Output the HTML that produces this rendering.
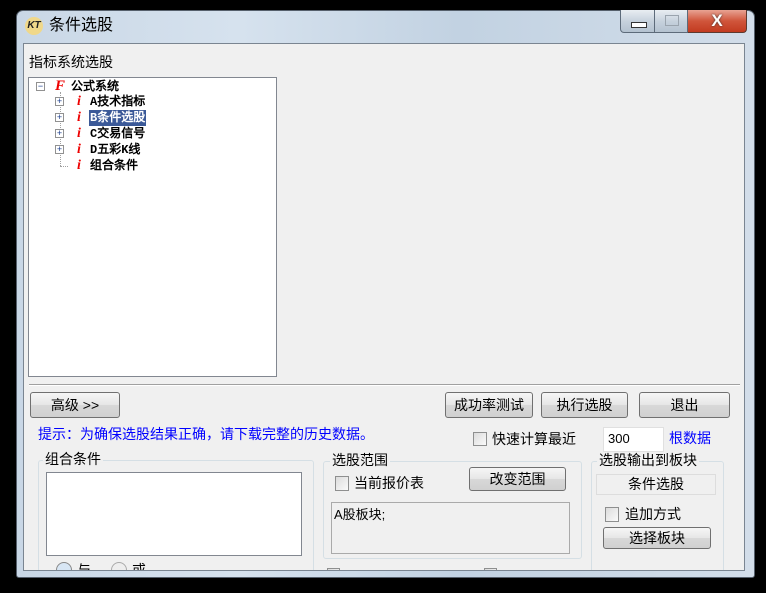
<!DOCTYPE html>
<html><head><meta charset="utf-8"><style>
body{margin:0;width:766px;height:593px;background:#000;position:relative;overflow:hidden;font-family:"Liberation Sans","Noto Sans CJK SC","WenQuanYi Zen Hei",sans-serif;font-size:13px;color:#000}
.a{position:absolute}
.win{left:16px;top:10px;width:739px;height:568px;border-radius:7px 7px 3px 3px;background:linear-gradient(90deg,#c9d7e6 0%,#d6e2ee 30%,#c2d2e2 60%,#d2dde9 100%);border:1px solid #56606c;box-sizing:border-box}
.client{left:23px;top:43px;width:722px;height:528px;background:#f0f0f0;border:1px solid #7a8591;box-sizing:border-box;overflow:hidden}
.btn{background:linear-gradient(#f6f6f6,#e6e6e6 50%,#d8d8d8 51%,#d0d0d0);border:1px solid #707070;border-radius:3px;box-sizing:border-box;text-align:center;font-size:14px;line-height:24px}
.cb{width:13px;height:13px;border:1px solid #8e8f8f;background:linear-gradient(135deg,#dcdcdc,#fafafa);box-sizing:border-box}
.grp{border:1px solid #d5dfe5;border-radius:3px;box-sizing:border-box}
.lg{background:#f0f0f0;padding:0 2px;font-size:14px;line-height:16px}
.t{font-size:12px;font-weight:bold;line-height:16px;font-family:"Liberation Mono","WenQuanYi Zen Hei",monospace}
.ri{color:#e00;font-style:italic;font-weight:bold;font-family:"Liberation Serif",serif;font-size:14px}
.pl{width:9px;height:9px;border:1px solid #919191;box-sizing:border-box;background:#fff;font-size:9px;line-height:7px;text-align:center;color:#1a3c8c}
</style></head><body>
<div class="a win"></div>
<div class="a" style="left:25px;top:17px;width:18px;height:18px;border-radius:50%;background:#f0d88a;font:bold italic 10px 'Liberation Sans';line-height:18px;text-align:center;color:#222">KT</div>
<div class="a" style="left:49px;top:16px;font-size:16px;line-height:20px">条件选股</div>
<div class="a" style="left:620px;top:10px;width:35px;height:23px;border:1px solid #5d6b7a;border-top:none;border-radius:0 0 0 4px;background:linear-gradient(#e8edf2,#c7d2dd 50%,#b4c2d0);box-sizing:border-box"><div class="a" style="left:10px;top:12px;width:14px;height:4px;background:#fff;border:1px solid #333"></div></div>
<div class="a" style="left:655px;top:10px;width:33px;height:23px;border:1px solid #5d6b7a;border-top:none;border-left:none;background:linear-gradient(#e8edf2,#c7d2dd 50%,#b4c2d0);box-sizing:border-box"><div class="a" style="left:10px;top:5px;width:12px;height:9px;border:1px solid #9aa4ae"></div></div>
<div class="a" style="left:688px;top:10px;width:59px;height:23px;border:1px solid #5d3a30;border-top:none;border-left:none;border-radius:0 0 4px 0;background:linear-gradient(#e8a393,#d0553b 50%,#c23b20);box-sizing:border-box;color:#fff;font:bold 17px 'Liberation Sans';text-align:center;line-height:22px;text-shadow:0 0 2px #333">X</div>
<div class="a client">
<div class="a" style="left:5px;top:9px;font-size:14px;line-height:18px">指标系统选股</div>
<div class="a" style="left:4px;top:33px;width:249px;height:300px;background:#fff;border:1px solid #828790;box-sizing:border-box"></div>
<div class="a pl" style="left:12px;top:38px">−</div>
<div class="a" style="left:36px;top:48px;height:74px;border-left:1px dotted #a0a0a0"></div>
<div class="a" style="left:36px;top:122px;width:8px;border-top:1px dotted #a0a0a0"></div>
<div class="a ri" style="left:31px;top:34px;font-size:15px">F</div>
<div class="a t" style="left:47px;top:35px">公式系统</div>
<div class="a pl" style="left:31px;top:53px">+</div><div class="a ri" style="left:53px;top:50px">i</div><div class="a t" style="left:66px;top:50px">A技术指标</div>
<div class="a pl" style="left:31px;top:69px">+</div><div class="a ri" style="left:53px;top:66px">i</div><div class="a t" style="left:65px;top:66px;background:#3b5998;color:#fff;padding:0 1px">B条件选股</div>
<div class="a pl" style="left:31px;top:85px">+</div><div class="a ri" style="left:53px;top:82px">i</div><div class="a t" style="left:66px;top:82px">C交易信号</div>
<div class="a pl" style="left:31px;top:101px">+</div><div class="a ri" style="left:53px;top:98px">i</div><div class="a t" style="left:66px;top:98px">D五彩K线</div>
<div class="a ri" style="left:53px;top:114px">i</div><div class="a t" style="left:66px;top:114px">组合条件</div>
<div class="a" style="left:5px;top:340px;width:711px;height:1px;background:#a0a0a0;border-bottom:1px solid #fff"></div>
<div class="a btn" style="left:6px;top:348px;width:90px;height:26px">高级 &gt;&gt;</div>
<div class="a btn" style="left:421px;top:348px;width:88px;height:26px">成功率测试</div>
<div class="a btn" style="left:517px;top:348px;width:87px;height:26px">执行选股</div>
<div class="a btn" style="left:615px;top:348px;width:91px;height:26px">退出</div>
<div class="a" style="left:14px;top:381px;color:#0000ff;font-size:14px;line-height:18px">提示：为确保选股结果正确，请下载完整的历史数据。</div>
<div class="a cb" style="left:449px;top:388px;width:14px;height:14px"></div>
<div class="a" style="left:468px;top:386px;font-size:14px;line-height:18px">快速计算最近</div>
<div class="a" style="left:579px;top:383px;width:61px;height:25px;background:#fff;border:1px solid #e0e0e0;box-sizing:border-box;font-size:13px;line-height:22px;padding-left:4px">300</div>
<div class="a" style="left:645px;top:385px;color:#0000ff;font-size:14px;line-height:18px">根数据</div>
<div class="a grp" style="left:14px;top:416px;width:276px;height:120px"></div>
<div class="a lg" style="left:19px;top:407px">组合条件</div>
<div class="a" style="left:22px;top:428px;width:256px;height:84px;background:#fff;border:1px solid #828790;box-sizing:border-box"></div>
<div class="a" style="left:32px;top:518px;width:14px;height:14px;border-radius:50%;border:1px solid #888;background:#d8e6f4"></div><div class="a" style="left:53px;top:516px;font-size:14px">与</div>
<div class="a" style="left:87px;top:518px;width:14px;height:14px;border-radius:50%;border:1px solid #aaa;background:#eee"></div><div class="a" style="left:108px;top:516px;font-size:14px">或</div>
<div class="a grp" style="left:299px;top:417px;width:259px;height:98px"></div>
<div class="a lg" style="left:306px;top:408px">选股范围</div>
<div class="a cb" style="left:311px;top:432px;width:14px;height:15px"></div>
<div class="a" style="left:330px;top:430px;font-size:14px;line-height:18px">当前报价表</div>
<div class="a btn" style="left:445px;top:423px;width:97px;height:24px;line-height:22px">改变范围</div>
<div class="a" style="left:307px;top:458px;width:239px;height:52px;border:1px solid #aaa;box-sizing:border-box;font-size:13px;padding:1px 2px">A股板块;</div>
<div class="a cb" style="left:303px;top:524px"></div><div class="a cb" style="left:460px;top:524px"></div>
<div class="a grp" style="left:567px;top:417px;width:133px;height:120px"></div>
<div class="a lg" style="left:573px;top:408px">选股输出到板块</div>
<div class="a" style="left:572px;top:430px;width:120px;height:21px;border:1px solid #ddd;box-sizing:border-box;text-align:center;font-size:14px;line-height:19px">条件选股</div>
<div class="a cb" style="left:581px;top:463px;width:14px;height:15px"></div>
<div class="a" style="left:601px;top:461px;font-size:14px;line-height:18px">追加方式</div>
<div class="a btn" style="left:579px;top:483px;width:108px;height:22px;line-height:20px">选择板块</div>
</div>
</body></html>
